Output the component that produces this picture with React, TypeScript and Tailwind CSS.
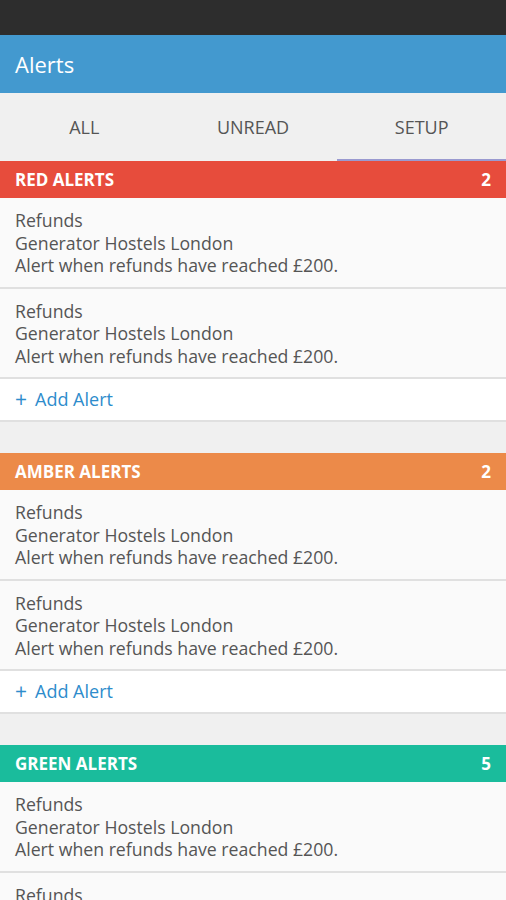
import React from 'react';

interface Section {
  title: string;
  count: number;
  color: string;
  items: number;
}

const sections: Section[] = [
  { title: 'RED ALERTS', count: 2, color: 'bg-[#e74c3c]', items: 2 },
  { title: 'AMBER ALERTS', count: 2, color: 'bg-[#ec8a49]', items: 2 },
  { title: 'GREEN ALERTS', count: 5, color: 'bg-[#1abc9c]', items: 5 },
];

const AlertItem: React.FC = () => (
  <div className="bg-[#fafafa] border-b-2 border-[#e0e0e0] px-[15px] pt-[11px] pb-[10px] text-[17.7px] leading-[22.5px] text-[#555]">
    <div>Refunds</div>
    <div>Generator Hostels London</div>
    <div>Alert when refunds have reached £200.</div>
  </div>
);

const App: React.FC = () => {
  return (
    <div className="w-[506px] h-[900px] overflow-hidden bg-[#f0f0f0] font-['Open_Sans',sans-serif]">
      <div className="h-[35px] bg-[#2d2d2d]" />
      <div className="h-[58px] bg-[#4399cf] flex items-center px-[15px] text-white text-[22px]">Alerts</div>
      <div className="h-[68px] flex bg-[#f0f0f0] text-[#555] text-[18px]">
        {['ALL', 'UNREAD', 'SETUP'].map((t) => (
          <div
            key={t}
            className={
              t === 'SETUP'
                ? 'flex-1 flex items-center justify-center border-b-2 border-[#9a9ad0] pt-[2px]'
                : 'flex-1 flex items-center justify-center border-b-2 border-transparent pt-[2px]'
            }
          >
            {t}
          </div>
        ))}
      </div>
      {sections.map((s, i) => (
        <div key={s.title} className={i > 0 ? 'mt-[31px]' : ''}>
          <div className={`${s.color} h-[37px] flex items-center justify-between px-[15px] text-white font-bold text-[17px]`}>
            <span>{s.title}</span>
            <span>{s.count}</span>
          </div>
          {Array.from({ length: s.items }).map((_, j) => (
            <AlertItem key={j} />
          ))}
          <div className="bg-white h-[43px] border-b-2 border-[#e0e0e0] flex items-center px-[15px] text-[18px] text-[#2e8ccc]">
            <span className="mr-[8px] text-[21px] leading-none">+</span>Add Alert
          </div>
        </div>
      ))}
    </div>
  );
};

export default App;
